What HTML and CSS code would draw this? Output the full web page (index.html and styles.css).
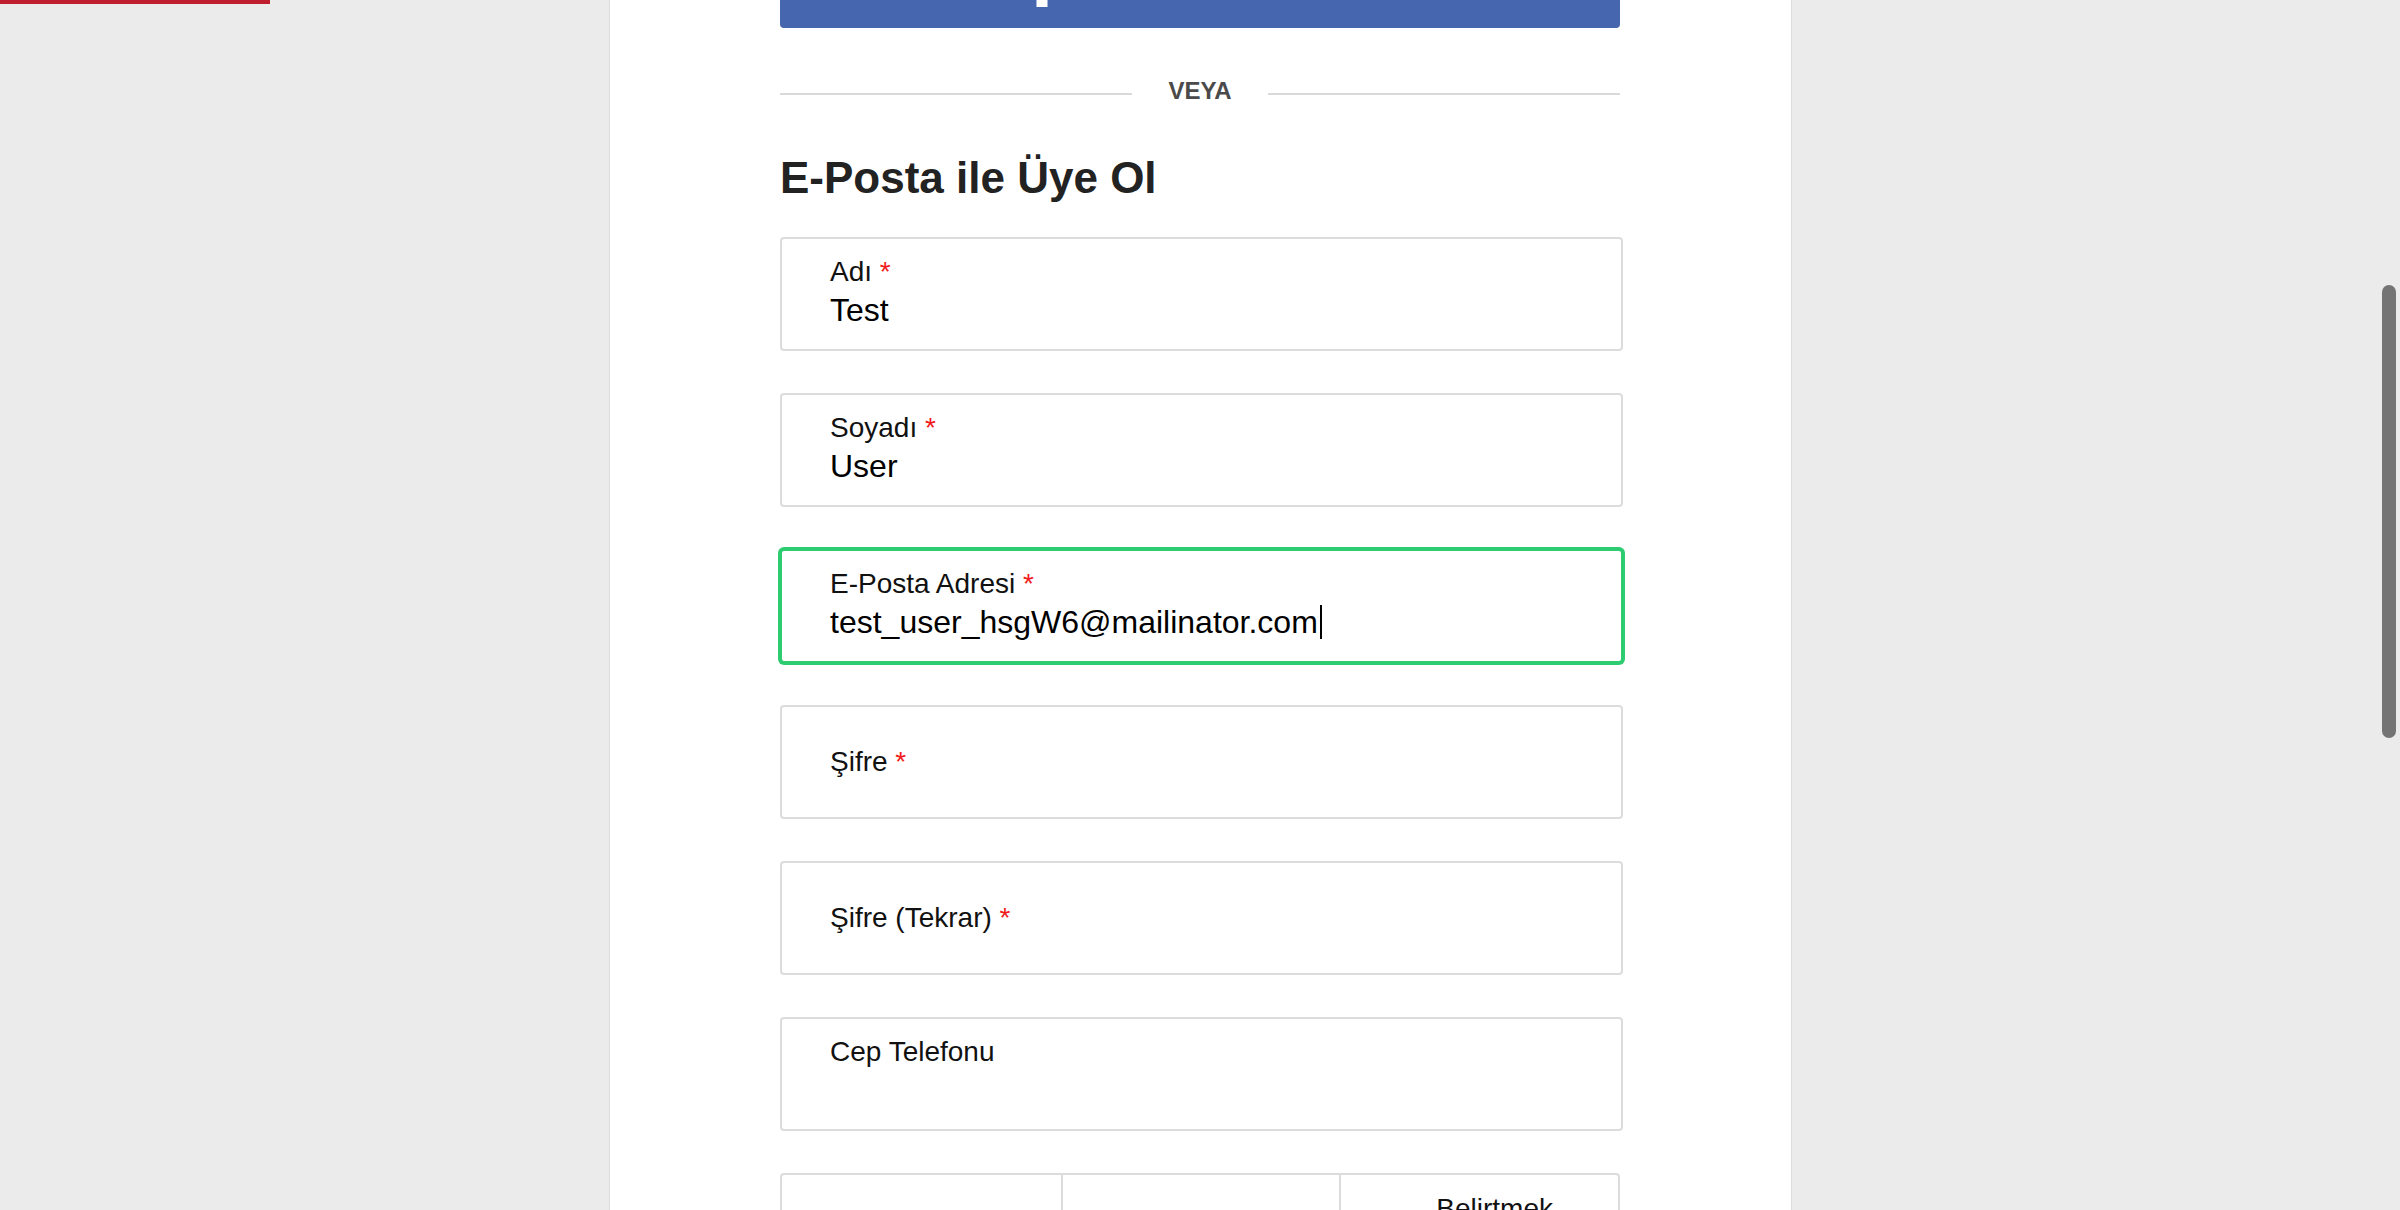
FILE: index.html
```html
<!DOCTYPE html>
<html lang="tr">
<head>
<meta charset="utf-8">
<title>Üye Ol</title>
<link rel="stylesheet" href="styles.css">
</head>
<body>
<div class="progress"></div>
<div class="page">
  <main class="card">
    <div class="content">
      <button class="fb-btn" type="button">
        <svg class="fb-icon" viewBox="0 0 28 46" width="28" height="46" aria-hidden="true"><path fill="#fff" d="M7.5 46V25H1v-8.5h6.5V11C7.5 4.5 11.5 0 18 0c3 0 5 .2 6 .4V8h-3.5C19 8 18.5 9 18.5 11v5.5h6.5L24 25h-5.5V46z"/></svg>
        <span class="fb-text">Facebook ile Üye Ol</span>
      </button>
      <div class="divider"><span class="line"></span><span class="or">VEYA</span><span class="line"></span></div>
      <h1 class="title">E-Posta ile Üye Ol</h1>
      <div class="fields">
        <div class="field">
          <div class="label">Adı <span class="req">*</span></div>
          <div class="value">Test</div>
        </div>
        <div class="field">
          <div class="label">Soyadı <span class="req">*</span></div>
          <div class="value">User</div>
        </div>
        <div class="field focused">
          <div class="label">E-Posta Adresi <span class="req">*</span></div>
          <div class="value">test_user_hsgW6@mailinator.com<span class="caret"></span></div>
        </div>
        <div class="field empty">
          <div class="label">Şifre <span class="req">*</span></div>
        </div>
        <div class="field empty">
          <div class="label">Şifre (Tekrar) <span class="req">*</span></div>
        </div>
        <div class="field">
          <div class="label">Cep Telefonu</div>
        </div>
        <div class="gender">
          <div class="opt">Kadın</div>
          <div class="opt">Erkek</div>
          <div class="opt">Belirtmek İstemiyorum</div>
        </div>
      </div>
    </div>
  </main>
</div>
<div class="scroll-thumb"></div>
</body>
</html>
```
FILE: styles.css
```css
html, body {
  margin: 0;
  padding: 0;
}
body {
  background: #ebebeb;
  font-family: "Liberation Sans", Arial, Helvetica, sans-serif;
  color: #111;
  height: 1210px;
  overflow: hidden;
}
.progress {
  position: fixed;
  top: 0;
  left: 0;
  width: 270px;
  height: 4px;
  background: #be1e2d;
  z-index: 5;
}
.scroll-thumb {
  position: fixed;
  top: 285px;
  right: 4px;
  width: 14px;
  height: 453px;
  border-radius: 7px;
  background: #747474;
  z-index: 5;
}
.page {
  display: flex;
  justify-content: center;
  height: 1210px;
}
.card {
  width: 1181px;
  background: #fff;
  box-shadow: 0 0 0 1px #dddddd;
}
.content {
  width: 840px;
  margin: 0 auto;
}
.fb-btn {
  display: flex;
  align-items: center;
  justify-content: center;
  gap: 9px;
  width: 100%;
  height: 88px;
  margin: -60px 0 0;
  padding: 0;
  border: none;
  border-radius: 4px;
  background: #4667b0;
  color: #fff;
  font-family: inherit;
  font-weight: bold;
  font-size: 32px;
}
.fb-icon {
  display: block;
  flex: none;
}
.fb-text {
  line-height: 38px;
  margin-bottom: 28px;
}
.divider {
  display: flex;
  align-items: center;
  height: 28px;
  margin-top: 49px;
}
.divider .line {
  flex: 1;
  height: 2px;
  margin-top: 5px;
  background: #d9d9d9;
}
.divider .or {
  margin: 0 36px;
  font-size: 24px;
  line-height: 28px;
  font-weight: bold;
  color: #4a4a4a;
}
.title {
  margin: 47px 0 0;
  font-size: 44px;
  line-height: 52px;
  font-weight: bold;
  color: #222;
}
.fields {
  display: flex;
  flex-direction: column;
  gap: 42px;
  margin-top: 33px;
}
.field {
  box-sizing: border-box;
  width: 843px;
  height: 114px;
  padding: 17px 0 0 48px;
  border: 2px solid #dcdcdc;
  border-radius: 4px;
  background: #fff;
}
.field.empty {
  display: flex;
  align-items: center;
  padding-top: 0;
}
.field.focused {
  border-color: #2ecc71;
  box-shadow: 0 0 0 2px #2ecc71;
}
.label {
  font-size: 28px;
  line-height: 32px;
  color: #111;
}
.req {
  color: #f21b1b;
}
.value {
  margin-top: 3px;
  font-size: 32px;
  line-height: 38px;
  color: #000;
  white-space: nowrap;
}
.caret {
  display: inline-block;
  width: 2px;
  height: 34px;
  margin-left: 2px;
  vertical-align: -6px;
  background: #000;
}
.gender {
  box-sizing: border-box;
  display: grid;
  grid-template-columns: 1fr 1fr 1fr;
  width: 840px;
  height: 104px;
  border: 2px solid #dcdcdc;
  border-radius: 4px;
}
.opt {
  display: flex;
  align-items: center;
  justify-content: center;
  padding: 0 10px 0 40px;
  text-align: center;
  font-size: 28px;
  line-height: 32px;
  color: #111;
}
.opt + .opt {
  border-left: 2px solid #dcdcdc;
}
```
